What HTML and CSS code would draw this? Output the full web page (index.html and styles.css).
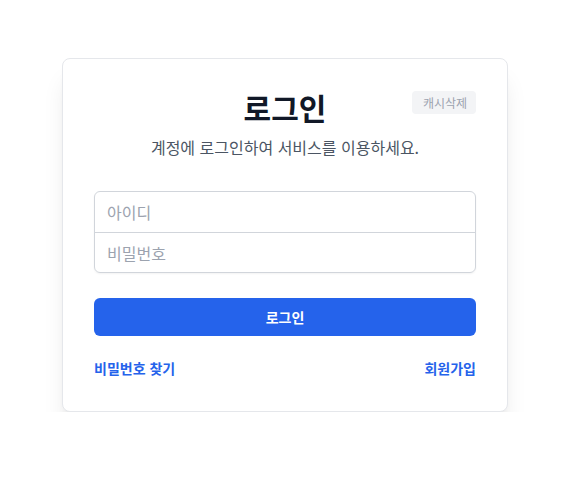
FILE: index.html
```html
<!DOCTYPE html>
<html lang="ko">
<head>
<meta charset="utf-8">
<link rel="stylesheet" href="styles.css">
</head>
<body>
<div class="page">
  <div class="card">
    <div class="head">
      <h1 class="title">로그인</h1>
      <button class="cache">캐시삭제</button>
    </div>
    <p class="subtitle">계정에 로그인하여 서비스를 이용하세요.</p>
    <div class="fields">
      <input class="field" type="text" placeholder="아이디">
      <input class="field" type="password" placeholder="비밀번호">
    </div>
    <button class="submit">로그인</button>
    <div class="links">
      <a class="link">비밀번호 찾기</a>
      <a class="link">회원가입</a>
    </div>
  </div>
</div>
</body>
</html>
```

FILE: styles.css
```css
* { box-sizing: border-box; }
html, body { margin: 0; padding: 0; background: #ffffff; }
body { font-family: "Noto Sans CJK KR", "Noto Sans", sans-serif; color: #111827; }
.page { padding: 58px 0 0 62px; }
.card {
  width: 446px;
  height: 354px;
  background: #fff;
  border: 1px solid #e5e7eb;
  border-radius: 8px;
  box-shadow: 0 20px 25px -5px rgba(0,0,0,0.1), 0 8px 10px -6px rgba(0,0,0,0.1);
  padding: 28px 31px 32px;
}
.head { position: relative; display: flex; justify-content: center; }
.title { margin: 0; font-size: 30px; font-weight: 700; line-height: 40px; color: #111827; }
.cache {
  position: absolute; right: 0; top: 4px;
  width: 64px; height: 23px;
  border: none; border-radius: 4px;
  background: #f3f4f6; color: #9ca3af;
  font-family: inherit; font-size: 12px; padding: 0 0 0 2px;
}
.subtitle { margin: 8px 0 0; text-align: center; font-size: 16px; line-height: 24px; color: #4b5563; }
.fields {
  margin-top: 32px;
  border: 1px solid #d1d5db; border-radius: 6px;
  box-shadow: 0 1px 2px rgba(0,0,0,0.05);
  display: flex; flex-direction: column;
}
.field {
  height: 40px; border: none; outline: none; background: transparent;
  padding: 0 12px; font-family: inherit; font-size: 16px; color: #111827;
}
.field::placeholder { color: #9ca3af; }
.field + .field { border-top: 1px solid #d1d5db; }
.submit {
  margin-top: 25px; width: 100%; height: 38px;
  border: none; border-radius: 6px; background: #2563eb; color: #fff;
  font-family: inherit; font-size: 14px; font-weight: 700;
}
.links { margin-top: 22px; display: flex; justify-content: space-between; }
.link { color: #2563eb; font-size: 14px; font-weight: 600; line-height: 20px; text-decoration: none; }
```
